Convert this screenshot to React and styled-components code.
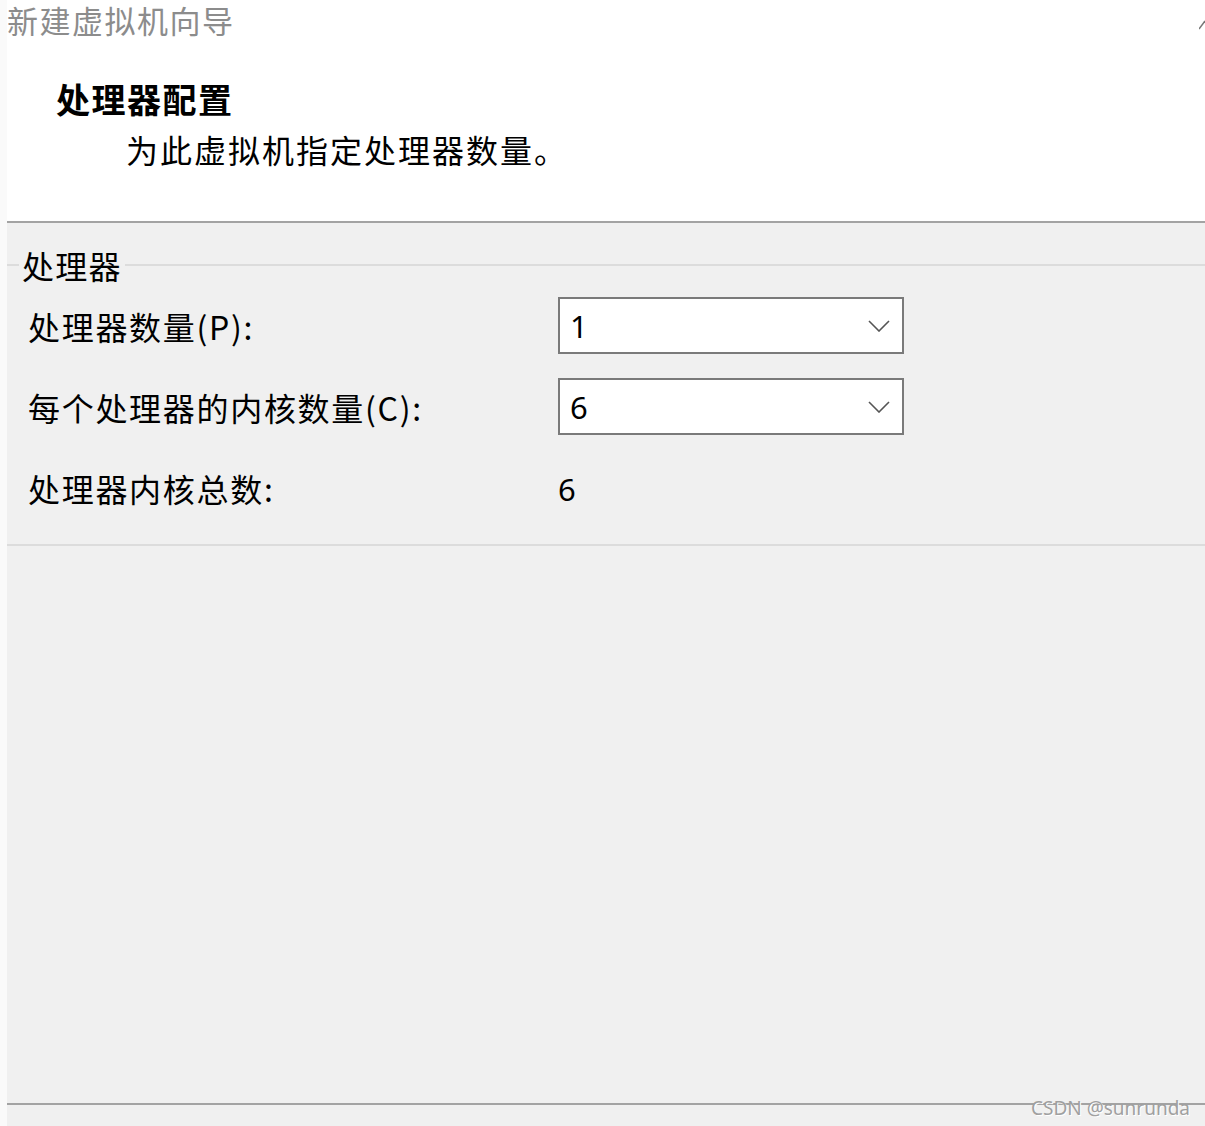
import React from 'react';
import styled, { createGlobalStyle } from 'styled-components';

const GlobalStyle = createGlobalStyle`
  html, body {
    margin: 0;
    padding: 0;
    background: #ffffff;
  }
  body {
    font-family: "Noto Sans CJK SC", "Noto Sans", sans-serif;
    color: #000;
  }
`;

const Page = styled.div`
  position: relative;
  width: 1205px;
  height: 1126px;
  display: flex;
  overflow: hidden;
`;

const LeftStrip = styled.div`
  width: 7px;
  flex-shrink: 0;
  background: #fafafa;
`;

const Main = styled.div`
  flex: 1;
  display: flex;
  flex-direction: column;
`;

const Header = styled.header`
  position: relative;
  height: 223px;
  background: #ffffff;
  border-bottom: 2px solid #a3a3a3;
  box-sizing: border-box;
`;

const WindowTitle = styled.div`
  padding-top: 2px;
  font-size: 31px;
  line-height: 36px;
  color: #8c8c8c;
  letter-spacing: 1.5px;
`;

const Heading = styled.h1`
  margin: 39px 0 0 49px;
  font-size: 34px;
  line-height: 44px;
  font-weight: 700;
  letter-spacing: 1.5px;
`;

const Subtitle = styled.p`
  margin: 8px 0 0 119px;
  font-size: 32px;
  line-height: 40px;
  font-weight: 400;
  letter-spacing: 2px;
`;

const CornerMark = styled.svg`
  position: absolute;
  right: 0;
  top: 18px;
`;

const Body = styled.div`
  flex: 1;
  background: #f0f0f0;
  display: flex;
  flex-direction: column;
`;

const GroupBox = styled.fieldset`
  margin: 22px 0 0 0;
  padding: 12px 0 28px 21px;
  border: none;
  border-top: 2px solid #dcdcdc;
  border-bottom: 2px solid #dcdcdc;
  min-width: 0;
`;

const GroupTitle = styled.legend`
  margin-left: -9px;
  padding: 0 3px;
  font-size: 32px;
  line-height: 40px;
  letter-spacing: 1.3px;
`;

const FormGrid = styled.div`
  display: grid;
  grid-template-columns: 530px 346px;
  grid-auto-rows: 57px;
  row-gap: 24px;
  align-items: center;
`;

const Label = styled.div`
  font-size: 32px;
  line-height: 40px;
  letter-spacing: 1.7px;
  white-space: nowrap;
`;

const Combo = styled.div`
  height: 57px;
  box-sizing: border-box;
  border: 2px solid #7a7a7a;
  background: #ffffff;
  display: flex;
  align-items: center;
  justify-content: space-between;
  padding: 0 12px 0 10px;
`;

const Value = styled.span`
  font-family: "Noto Sans", sans-serif;
  font-size: 31px;
  line-height: 40px;
`;

const StaticValue = styled(Value)`
  padding-top: 2px;
`;

const Spacer = styled.div`
  flex: 1;
`;

const Footer = styled.div`
  height: 21px;
  border-top: 2px solid #a3a3a3;
  background: #f0f0f0;
`;

const Watermark = styled.div`
  position: absolute;
  right: 15px;
  bottom: 6px;
  font-family: "Noto Sans", sans-serif;
  font-size: 19px;
  line-height: 24px;
  color: #a0a0a0;
  text-shadow: 1px 1px 0 #ffffff;
`;

const Chevron = () => (
  <svg width="22" height="12" viewBox="0 0 22 12">
    <polyline points="1,1 11,11 21,1" fill="none" stroke="#555" strokeWidth="1.6" />
  </svg>
);

const rows = [
  { label: '处理器数量(P):', value: '1', select: true },
  { label: '每个处理器的内核数量(C):', value: '6', select: true },
  { label: '处理器内核总数:', value: '6', select: false },
];

export default function App() {
  return (
    <>
      <GlobalStyle />
      <Page>
        <LeftStrip />
        <Main>
          <Header>
            <WindowTitle>新建虚拟机向导</WindowTitle>
            <Heading>处理器配置</Heading>
            <Subtitle>为此虚拟机指定处理器数量。</Subtitle>
            <CornerMark width="6" height="12" viewBox="0 0 6 12">
              <line x1="0" y1="11" x2="6" y2="3" stroke="#777" strokeWidth="1.5" />
            </CornerMark>
          </Header>
          <Body>
            <GroupBox>
              <GroupTitle>处理器</GroupTitle>
              <FormGrid>
                {rows.map((row) => (
                  <React.Fragment key={row.label}>
                    <Label>{row.label}</Label>
                    {row.select ? (
                      <Combo>
                        <Value>{row.value}</Value>
                        <Chevron />
                      </Combo>
                    ) : (
                      <StaticValue>{row.value}</StaticValue>
                    )}
                  </React.Fragment>
                ))}
              </FormGrid>
            </GroupBox>
            <Spacer />
            <Footer />
          </Body>
        </Main>
        <Watermark>CSDN @sunrunda</Watermark>
      </Page>
    </>
  );
}
